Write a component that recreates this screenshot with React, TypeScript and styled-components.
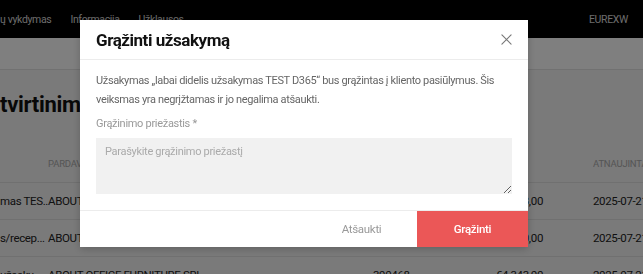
import React from "react";
import styled, { createGlobalStyle } from "styled-components";

const GlobalStyle = createGlobalStyle`
  html, body {
    margin: 0;
    padding: 0;
  }
  body {
    width: 643px;
    height: 274px;
    overflow: hidden;
    font-family: Roboto, "Liberation Sans", sans-serif;
    background: #f4f4f4;
  }
  * {
    box-sizing: border-box;
  }
`;

const rows = [
  { name: "mas TES...", seller: "ABOUT", code: "", amount: "€4 343,00", date: "2025-07-21" },
  { name: "s/recep...", seller: "ABOUT", code: "", amount: "€1 120,00", date: "2025-07-21" },
  {
    name: "užsaky...",
    seller: "ABOUT OFFICE FURNITURE SRL",
    code: "390468",
    amount: "€4 343,00",
    date: "2025-07-21",
  },
];

const App: React.FC = () => {
  return (
    <>
      <GlobalStyle />
      <Page>
        <NavBar>
          <NavLinks>
            <NavLink>ų vykdymas</NavLink>
            <NavLink>Informacija</NavLink>
            <NavLink>Užklausos</NavLink>
          </NavLinks>
          <NavLink>EUREXW</NavLink>
        </NavBar>
        <SubHeader />
        <Content>
          <Heading>tvirtinimo</Heading>
          <Table>
            <HeadRow>
              <HeadCell />
              <HeadCell>Pardavėjas</HeadCell>
              <HeadCell />
              <HeadCell />
              <HeadCell>Atnaujinta</HeadCell>
            </HeadRow>
            {rows.map((r, i) => (
              <Row key={i}>
                <Cell>{r.name}</Cell>
                <Cell>{r.seller}</Cell>
                <Cell>{r.code}</Cell>
                <Cell $align="right">{r.amount}</Cell>
                <Cell>{r.date}</Cell>
              </Row>
            ))}
          </Table>
        </Content>
      </Page>

      <Overlay>
        <Modal>
          <ModalHeader>
            <Title>Grąžinti užsakymą</Title>
            <CloseButton aria-label="Uždaryti">
              <svg viewBox="0 0 12 12" fill="none" stroke="currentColor" strokeWidth={1.2}>
                <path d="M1 1l10 10M11 1L1 11" strokeLinecap="round" />
              </svg>
            </CloseButton>
          </ModalHeader>
          <ModalBody>
            <Message>
              Užsakymas „labai didelis užsakymas TEST D365“ bus grąžintas į kliento pasiūlymus. Šis
              veiksmas yra negrįžtamas ir jo negalima atšaukti.
            </Message>
            <Label>Grąžinimo priežastis *</Label>
            <ReasonInput placeholder="Parašykite grąžinimo priežastį" />
          </ModalBody>
          <ModalFooter>
            <FooterButton $variant="ghost">Atšaukti</FooterButton>
            <FooterButton $variant="danger">Grąžinti</FooterButton>
          </ModalFooter>
        </Modal>
      </Overlay>
    </>
  );
};

export default App;

const Page = styled.div`
  width: 643px;
  height: 274px;
  overflow: hidden;
`;

const NavBar = styled.nav`
  height: 38px;
  background: #000;
  display: flex;
  align-items: center;
  justify-content: space-between;
  padding: 0 15px 0 0;
`;

const NavLinks = styled.div`
  display: flex;
  gap: 19px;
`;

const NavLink = styled.span`
  font-size: 10.5px;
  color: #d8d8d8;
  letter-spacing: -0.35px;
`;

const SubHeader = styled.div`
  height: 32px;
  background: #fff;
  border-bottom: 1px solid #e2e2e2;
`;

const Content = styled.div`
  padding-top: 21px;
`;

const Heading = styled.h1`
  margin: 0 0 26px;
  font-size: 22px;
  line-height: 28px;
  font-weight: 700;
  color: #111;
  letter-spacing: -0.3px;
`;

const Table = styled.div`
  display: flex;
  flex-direction: column;
`;

const HeadRow = styled.div`
  display: grid;
  grid-template-columns: 48px 325px 111px 109px 1fr;
  height: 38px;
  align-items: center;
  border-bottom: 1px solid #e0e0e0;
`;

const HeadCell = styled.span`
  font-size: 9.5px;
  text-transform: uppercase;
  letter-spacing: -0.2px;
  color: #aaa;
  white-space: nowrap;
  overflow: hidden;
`;

const Row = styled(HeadRow)`
  height: 37px;
`;

const Cell = styled.span<{ $align?: "left" | "right" }>`
  font-size: 11.5px;
  letter-spacing: -0.35px;
  color: #222;
  white-space: nowrap;
  overflow: hidden;
  text-align: ${(p) => p.$align ?? "left"};
  padding-right: ${(p) => (p.$align === "right" ? "50px" : "8px")};
`;

const Overlay = styled.div`
  position: fixed;
  inset: 0;
  background: rgba(0, 0, 0, 0.5);
  padding: 20px 0 0 80px;
`;

const Modal = styled.div`
  width: 448px;
  background: #fff;
  box-shadow: 0 2px 8px rgba(0, 0, 0, 0.2);
  display: flex;
  flex-direction: column;
`;

const ModalHeader = styled.div`
  height: 40px;
  padding: 0 16px;
  display: flex;
  align-items: center;
  justify-content: space-between;
  border-bottom: 1px solid #ececec;
`;

const Title = styled.h2`
  margin: 0;
  font-size: 17px;
  font-weight: 700;
  color: #111;
  letter-spacing: -0.45px;
`;

const CloseButton = styled.button`
  border: none;
  background: none;
  padding: 0;
  width: 11px;
  height: 11px;
  color: #777;
  display: flex;

  svg {
    width: 11px;
    height: 11px;
  }
`;

const ModalBody = styled.div`
  padding: 11px 16px 16px;
  display: flex;
  flex-direction: column;
`;

const Message = styled.p`
  margin: 0 0 7px;
  font-size: 11px;
  line-height: 19px;
  letter-spacing: -0.35px;
  color: #666;
`;

const Label = styled.label`
  font-size: 11px;
  line-height: 16px;
  letter-spacing: -0.3px;
  color: #999;
  margin-bottom: 6px;
`;

const ReasonInput = styled.textarea`
  height: 56px;
  border: none;
  outline: none;
  background: #f1f1f1;
  padding: 6px 9px;
  font-family: Roboto, "Liberation Sans", sans-serif;
  font-size: 11px;
  line-height: 16px;
  letter-spacing: -0.3px;
  color: #333;
  resize: vertical;

  &::placeholder {
    color: #aaa;
  }
`;

const ModalFooter = styled.div`
  height: 37px;
  border-top: 1px solid #ececec;
  display: flex;
  justify-content: flex-end;
`;

const FooterButton = styled.button<{ $variant: "ghost" | "danger" }>`
  width: 111px;
  border: none;
  font-family: Roboto, "Liberation Sans", sans-serif;
  font-size: 11.5px;
  letter-spacing: -0.3px;
  font-weight: ${(p) => (p.$variant === "danger" ? 500 : 400)};
  background: ${(p) => (p.$variant === "danger" ? "#eb5757" : "transparent")};
  color: ${(p) => (p.$variant === "danger" ? "#fff" : "#999")};
  cursor: pointer;
`;
